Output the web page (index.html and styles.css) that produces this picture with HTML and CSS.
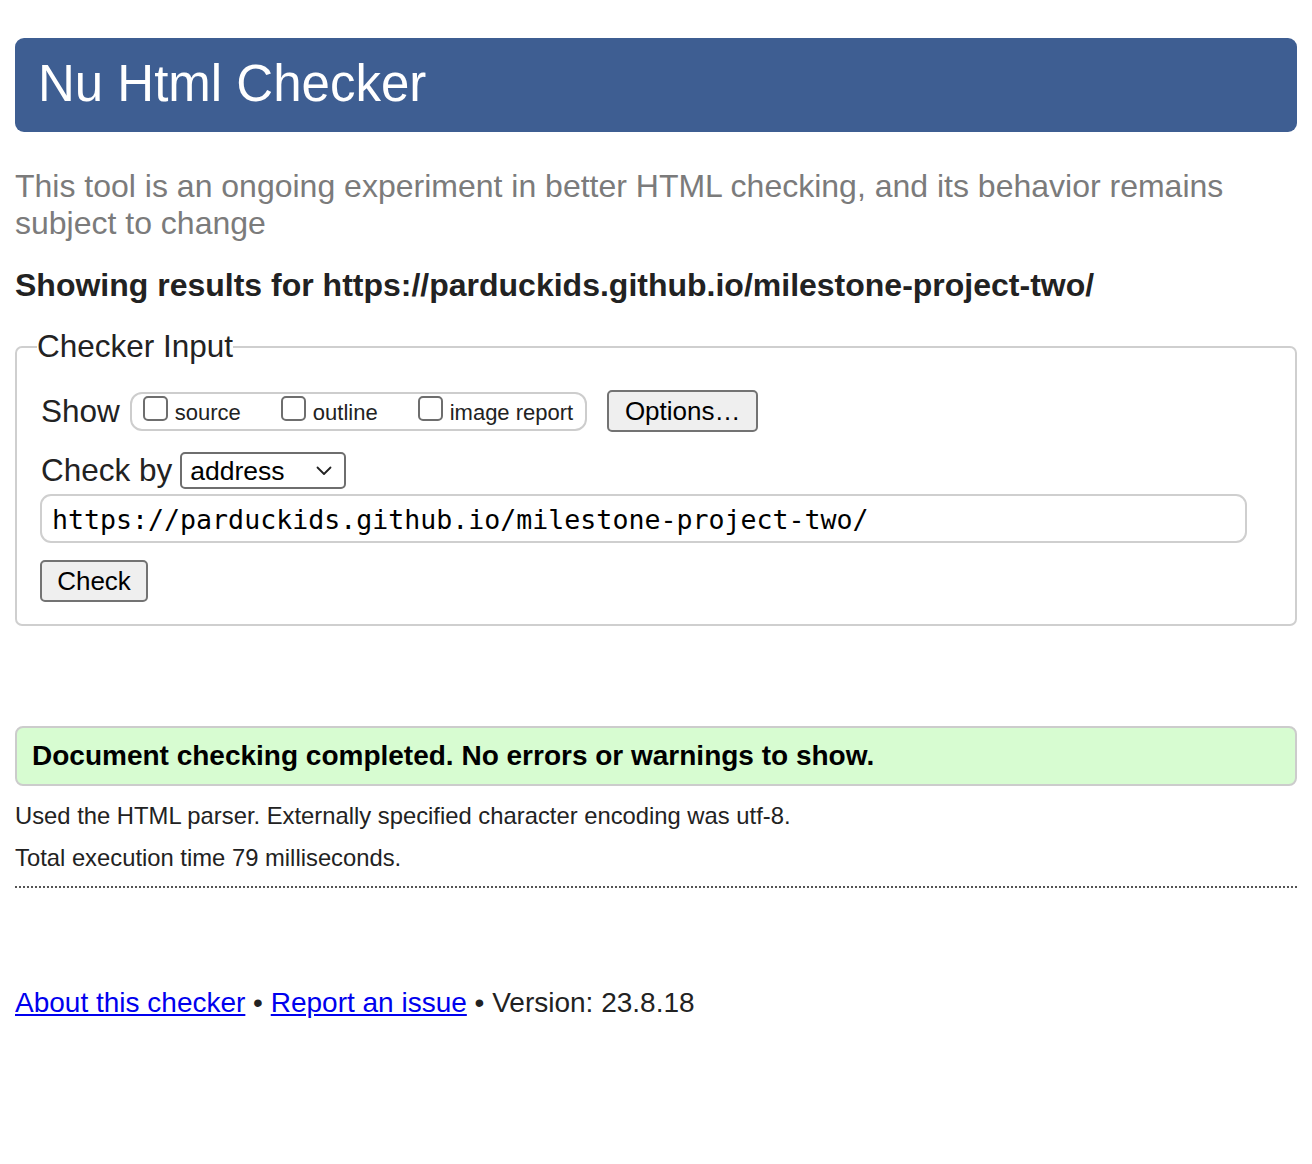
FILE: index.html
```html
<!DOCTYPE html>
<html lang="en">
<head>
<meta charset="utf-8">
<title>Nu Html Checker</title>
<link rel="stylesheet" href="styles.css">
</head>
<body>
<h1 class="title">Nu Html Checker</h1>
<p class="intro">This tool is an ongoing experiment in better HTML checking, and its behavior remains subject to change</p>
<h2 class="showing">Showing results for https://parduckids.github.io/milestone-project-two/</h2>
<form class="form">
  <fieldset class="fieldset">
    <legend class="legend">Checker Input</legend>
    <div class="row row-show">
      <span class="label">Show</span>
      <div class="options-group">
        <label class="opt"><input type="checkbox" class="cb"><span>source</span></label>
        <label class="opt"><input type="checkbox" class="cb"><span>outline</span></label>
        <label class="opt"><input type="checkbox" class="cb"><span>image report</span></label>
      </div>
      <button type="button" class="btn btn-options">Options…</button>
    </div>
    <div class="row row-by">
      <span class="label">Check by</span>
      <div class="select">
        <span>address</span>
        <svg class="chev" width="16" height="10" viewBox="0 0 16 10"><path d="M1.5 1.5 L8 8 L14.5 1.5" fill="none" stroke="#222" stroke-width="1.8" stroke-linecap="round" stroke-linejoin="round"/></svg>
      </div>
    </div>
    <div class="url">https://parduckids.github.io/milestone-project-two/</div>
    <div class="row row-check">
      <button type="button" class="btn btn-check">Check</button>
    </div>
  </fieldset>
</form>
<div class="success">Document checking completed. No errors or warnings to show.</div>
<p class="details">Used the HTML parser. Externally specified character encoding was utf-8.</p>
<p class="details">Total execution time 79 milliseconds.</p>
<hr class="sep">
<p class="footer"><a href="#">About this checker</a> • <a href="#">Report an issue</a> • Version: 23.8.18</p>
</body>
</html>
```
FILE: styles.css
```css
html, body {
  background: #fff;
}
body {
  margin: 38px 15px 0;
  font-family: "Liberation Sans", Arial, Helvetica, sans-serif;
  color: #222;
  font-size: 21.33px;
}
.title {
  margin: 0;
  height: 94px;
  box-sizing: border-box;
  padding: 16px 23px 0;
  background: #3e5e92;
  color: #fff;
  border-radius: 9px;
  font-weight: normal;
  font-size: 51px;
  line-height: 59px;
}
.intro {
  margin: 36px 0 0;
  color: #7b7b7b;
  font-size: 32px;
  line-height: 37px;
}
.showing {
  margin: 25px 0 0;
  font-size: 32px;
  line-height: 37px;
  font-weight: bold;
  color: #222;
}
.form {
  margin: 24px 0 0;
}
.fieldset {
  margin: 0;
  border: 2px solid #cfcfcf;
  border-radius: 7px;
  padding: 25px 24px 22px;
  min-width: 0;
}
.legend {
  padding: 0;
  margin-left: -4px;
  font-size: 31.5px;
  line-height: 37px;
  color: #222;
}
.row {
  display: flex;
  align-items: center;
}
.label {
  font-size: 31.5px;
  color: #222;
  margin-right: 8px;
}
.options-group {
  display: flex;
  align-items: center;
  height: 39px;
  box-sizing: border-box;
  border: 2px solid #cdcdcd;
  border-radius: 12px;
  padding: 0 12px 0 11px;
  gap: 40px;
  margin-left: 2px;
}
.opt {
  display: flex;
  align-items: center;
  font-size: 22px;
  color: #222;
}
.cb {
  appearance: none;
  -webkit-appearance: none;
  width: 25px;
  height: 25px;
  margin: 0 7px 0 0;
  border: 2px solid #6e6e6e;
  border-radius: 5px;
  box-sizing: border-box;
  background: #fff;
  position: relative;
  top: -3px;
}
.opt span {
  position: relative;
  top: 2px;
}
.btn {
  font-family: "Liberation Sans", Arial, Helvetica, sans-serif;
  font-size: 26px;
  color: #000;
  background: #efefef;
  border: 2px solid #737373;
  border-radius: 5px;
  height: 42px;
  box-sizing: border-box;
  padding: 0 15px;
  line-height: 1;
}
.btn-options {
  margin-left: 20px;
  width: 151px;
}
.row-show {
  height: 42px;
}
.row-by {
  margin-top: 20px;
}
.select {
  display: flex;
  align-items: center;
  justify-content: space-between;
  width: 166px;
  height: 37px;
  box-sizing: border-box;
  border: 2px solid #6e6e6e;
  border-radius: 5px;
  padding: 1px 12px 0 8px;
  font-size: 26.5px;
  color: #000;
  margin-left: 0;
}
.url {
  margin-top: 5px;
  height: 49px;
  box-sizing: border-box;
  border: 2px solid #cfcfcf;
  border-radius: 11px;
  padding: 2px 10px 0;
  display: flex;
  align-items: center;
  font-family: "DejaVu Sans Mono", "Liberation Mono", monospace;
  font-size: 26.6px;
  color: #000;
  margin-right: 24px;
  margin-left: -1px;
}
.row-check {
  margin-top: 17px;
}
.btn-check {
  margin-left: -1px;
  width: 108px;
  padding: 0;
}
.success {
  margin-top: 100px;
  height: 60px;
  box-sizing: border-box;
  background: #d7fcd1;
  border: 2px solid #cccccc;
  border-radius: 8px;
  padding: 0 15px;
  display: flex;
  align-items: center;
  font-weight: bold;
  font-size: 28px;
  color: #000;
}
.details {
  margin: 16px 0 0;
  font-size: 23.8px;
  line-height: 28px;
  color: #222;
}
.details + .details {
  margin-top: 14px;
}
.sep {
  margin: 14px 0 0;
  border: 0;
  border-top: 2px dotted #555;
  height: 0;
}
.footer {
  margin: 98px 0 0;
  font-size: 28px;
  line-height: 34px;
  color: #222;
}
.footer a {
  color: #0000ee;
}
```
